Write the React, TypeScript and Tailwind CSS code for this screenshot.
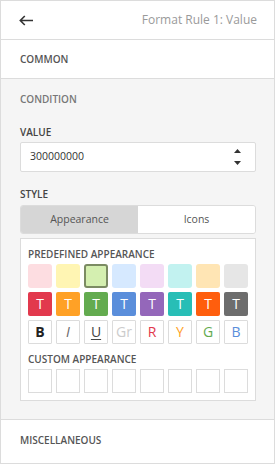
import React from 'react';

const light = ['#fddde1', '#fff5b3', '#d4efb0', '#d6e9ff', '#f3dcf5', '#c2f2f0', '#ffe5b4', '#e6e6e6'];
const dark = ['#e2394d', '#ffa126', '#63ab4f', '#5a8edb', '#9467ba', '#28beb6', '#ff5e0d', '#6d6d6d'];

const fontStyles = [
  { text: 'B', cls: 'font-bold text-[#222]' },
  { text: 'I', cls: 'italic text-[#666]' },
  { text: 'U', cls: 'underline underline-offset-2 text-[#444]' },
  { text: 'Gr', cls: 'text-[#cccccc]' },
  { text: 'R', cls: 'text-[#e2394d]' },
  { text: 'Y', cls: 'text-[#ffa126]' },
  { text: 'G', cls: 'text-[#63ab4f]' },
  { text: 'B', cls: 'text-[#5a8edb]' },
];

export default function App() {
  return (
    <div
      className="w-[275px] h-[464px] border border-[#dcdcdc] bg-white flex flex-col overflow-hidden"
      style={{ fontFamily: '"Open Sans", "Noto Sans", sans-serif' }}
    >
      {/* Header */}
      <div className="h-[39px] shrink-0 border-b border-[#dcdcdc] flex items-center justify-between pl-[18px] pr-[17px]">
        <svg width="15" height="11" viewBox="0 0 15 11" fill="none">
          <path d="M14 5.5H1.5M5.8 1L1.3 5.5L5.8 10" stroke="#333" strokeWidth="1.6" />
        </svg>
        <span className="text-[12px] text-[#9a9a9a]">Format Rule 1: Value</span>
      </div>

      {/* Common */}
      <div className="h-[39px] shrink-0 border-b border-[#dcdcdc] flex items-center pl-[19px] text-[10px] font-semibold text-[#555]">
        COMMON
      </div>

      {/* Condition */}
      <div className="h-[341px] shrink-0 bg-[#f5f5f5] border-b border-[#dcdcdc] pl-[19px] pr-[18px] flex flex-col">
        <div className="h-[40px] shrink-0 flex items-center text-[10px] font-semibold text-[#777]">CONDITION</div>

        <div className="mt-[5px] h-[16px] shrink-0 leading-[16px] text-[10px] font-semibold text-[#444]">VALUE</div>
        <div className="mt-[2px] h-[30px] shrink-0 bg-white border border-[#dcdcdc] rounded-[2px] flex items-center justify-between pl-[9px] pr-[14px]">
          <span className="text-[10.5px] text-[#333]">300000000</span>
          <div className="flex flex-col gap-[8px]">
            <svg width="7" height="4" viewBox="0 0 7 4">
              <path d="M3.5 0L7 4H0Z" fill="#333" />
            </svg>
            <svg width="7" height="4" viewBox="0 0 7 4">
              <path d="M0 0H7L3.5 4Z" fill="#333" />
            </svg>
          </div>
        </div>

        <div className="mt-[14px] h-[16px] shrink-0 leading-[16px] text-[10px] font-semibold text-[#444]">STYLE</div>
        <div className="mt-[3px] h-[29px] shrink-0 flex rounded-[3px] border border-[#dcdcdc] overflow-hidden text-[10.5px] text-[#555]">
          <div className="w-1/2 bg-[#d6d6d6] flex items-center justify-center">Appearance</div>
          <div className="w-1/2 bg-white flex items-center justify-center">Icons</div>
        </div>

        {/* Appearance box */}
        <div className="mt-[4px] h-[163px] shrink-0 bg-white border border-[#dcdcdc] px-[7px] pt-[7px] flex flex-col">
          <div className="h-[16px] leading-[16px] text-[10px] font-semibold text-[#555]">
            PREDEFINED APPEARANCE
          </div>
          <div className="mt-[2px] flex gap-[4px]">
            {light.map((c, i) => (
              <div
                key={i}
                className={`w-[24px] h-[24px] rounded-[3px] ${i === 2 ? 'border-2 border-[#7b8b63]' : ''}`}
                style={{ backgroundColor: c }}
              />
            ))}
          </div>
          <div className="mt-[4px] flex gap-[4px]">
            {dark.map((c, i) => (
              <div
                key={i}
                className="w-[24px] h-[24px] rounded-[2px] flex items-center justify-center text-white text-[14px] leading-none"
                style={{ backgroundColor: c }}
              >
                T
              </div>
            ))}
          </div>
          <div className="mt-[4px] flex gap-[4px]">
            {fontStyles.map((f, i) => (
              <div
                key={i}
                className={`w-[24px] h-[24px] border border-[#dcdcdc] rounded-[1px] flex items-center justify-center text-[14px] leading-none ${f.cls}`}
              >
                {f.text}
              </div>
            ))}
          </div>
          <div className="mt-[7px] h-[16px] leading-[16px] text-[10px] font-semibold text-[#555]">
            CUSTOM APPEARANCE
          </div>
          <div className="mt-[2px] flex gap-[4px]">
            {Array.from({ length: 8 }).map((_, i) => (
              <div key={i} className="w-[24px] h-[24px] border border-[#dcdcdc]" />
            ))}
          </div>
        </div>
      </div>

      {/* Miscellaneous */}
      <div className="h-[40px] shrink-0 flex items-center pl-[19px] text-[10px] font-semibold text-[#555]">
        MISCELLANEOUS
      </div>
    </div>
  );
}
